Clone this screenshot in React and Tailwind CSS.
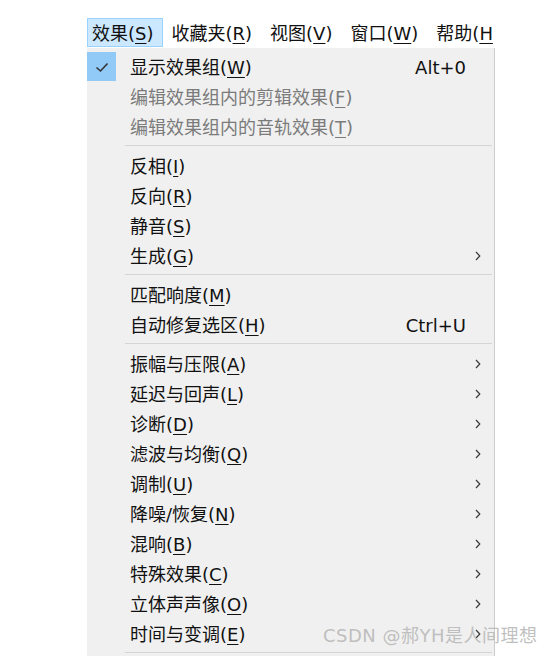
import React from 'react';

const FONT = { fontFamily: '"DejaVu Sans", "Noto Sans CJK SC", sans-serif' };

const menuBar = [
  { label: '效果', key: 'S', active: true },
  { label: '收藏夹', key: 'R' },
  { label: '视图', key: 'V' },
  { label: '窗口', key: 'W' },
  { label: '帮助', key: 'H', cut: true },
];

// sections of the dropdown, separated by a rule
const sections = [
  [
    { label: '显示效果组', key: 'W', shortcut: 'Alt+0', checked: true },
    { label: '编辑效果组内的剪辑效果', key: 'F', disabled: true },
    { label: '编辑效果组内的音轨效果', key: 'T', disabled: true },
  ],
  [
    { label: '反相', key: 'I' },
    { label: '反向', key: 'R' },
    { label: '静音', key: 'S' },
    { label: '生成', key: 'G', sub: true },
  ],
  [
    { label: '匹配响度', key: 'M' },
    { label: '自动修复选区', key: 'H', shortcut: 'Ctrl+U' },
  ],
  [
    { label: '振幅与压限', key: 'A', sub: true },
    { label: '延迟与回声', key: 'L', sub: true },
    { label: '诊断', key: 'D', sub: true },
    { label: '滤波与均衡', key: 'Q', sub: true },
    { label: '调制', key: 'U', sub: true },
    { label: '降噪/恢复', key: 'N', sub: true },
    { label: '混响', key: 'B', sub: true },
    { label: '特殊效果', key: 'C', sub: true },
    { label: '立体声声像', key: 'O', sub: true },
    { label: '时间与变调', key: 'E', sub: true },
  ],
];

const Mnemonic = ({ label, k, close = true }) => (
  <span className="whitespace-nowrap">
    {label}(<u className="underline-offset-[3px] decoration-1">{k}</u>{close ? ')' : ''}
  </span>
);

const Chevron = () => (
  <svg width="6" height="10" viewBox="0 0 6 10" className="text-[#3a3a3a]">
    <path d="M1 1 L4.8 5 L1 9" fill="none" stroke="currentColor" strokeWidth="1.2" />
  </svg>
);

const Check = () => (
  <svg width="16" height="16" viewBox="0 0 16 16">
    <path d="M2.5 8.5 L6.5 12 L13.5 4.5" fill="none" stroke="#333" strokeWidth="1.6" />
  </svg>
);

const Item = ({ item }) => (
  <div className={`flex h-[30px] items-center text-[18px] ${item.disabled ? 'text-[#7b7b7b]' : 'text-[#111]'}`}>
    <div className="w-[43px] h-full flex items-center">
      {item.checked && (
        <div className="w-[29px] h-[29px] mt-[1px] bg-[#91c9f7] flex items-center justify-center">
          <Check />
        </div>
      )}
    </div>
    <div className="flex-1 pt-[2px]">
      <Mnemonic label={item.label} k={item.key} />
    </div>
    {item.shortcut && <div className="pt-[2px]">{item.shortcut}</div>}
    <div className="w-[28px] flex items-center pl-[9px] pt-[2px]">
      {item.sub && <Chevron />}
    </div>
  </div>
);

const Separator = () => (
  <div className="h-[9px] flex items-center pl-[38px] pr-[2px]">
    <div className="h-px w-full bg-[#d5d5d5]" />
  </div>
);

export default function App() {
  return (
    <div className="relative w-[553px] h-[657px] bg-white overflow-hidden" style={FONT}>
      <div className="pt-[18px] pl-[87px]">
        {/* menu bar */}
        <div className="flex h-[29px] w-[408px] items-center overflow-hidden text-[18px] text-[#111]">
          {menuBar.map((m) => (
            <div
              key={m.label}
              className={`h-full flex items-center shrink-0 pt-[1px] ${
                m.active
                  ? 'pl-[4px] pr-[8px] bg-[#cce8ff] border border-[#99d1ff]'
                  : 'px-[8px] border border-transparent'
              }`}
            >
              <Mnemonic label={m.label} k={m.key} close={!m.cut} />
            </div>
          ))}
        </div>

        {/* dropdown */}
        <div className="mt-[1px] w-[408px] h-[608px] bg-[#f0f0f0] border-r border-[#cccccc] pt-[3px]">
          {sections.map((sec, i) => (
            <React.Fragment key={i}>
              {sec.map((item) => (
                <Item key={item.label} item={item} />
              ))}
              <Separator />
            </React.Fragment>
          ))}
        </div>
      </div>

      {/* watermark */}
      <div className="absolute left-[323px] top-[622px] text-[18px] tracking-[0.5px] text-[#b8b8b8]/90 whitespace-nowrap">
        CSDN @郝YH是人间理想
      </div>
    </div>
  );
}
